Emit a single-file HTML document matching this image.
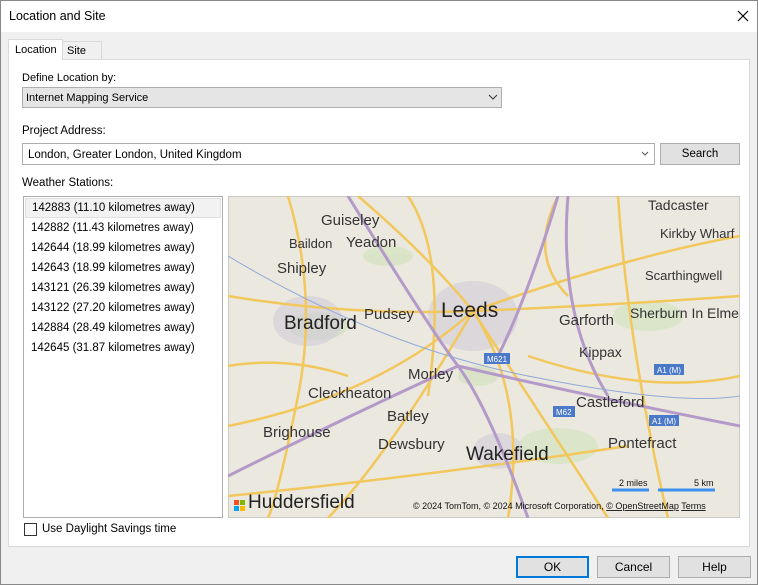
<!DOCTYPE html>
<html><head><style>
*{box-sizing:border-box}
body{margin:0;width:758px;height:585px;background:#f0f0f0;font-family:"Liberation Sans",sans-serif;font-size:11.5px;color:#000;position:relative;overflow:hidden;border:1px solid #888}
.a{position:absolute}
.btn{position:absolute;top:555px;height:22px;width:73px;background:#e1e1e1;border:1px solid #adadad;text-align:center;line-height:20px;font-size:12px}
.lst div{height:20px;line-height:20px;padding-left:6px}
</style></head><body>
<div class="a" style="left:0;top:0;width:756px;height:31px;background:#fff"></div>
<div class="a" style="left:8px;top:8px;font-size:12.5px">Location and Site</div>
<svg class="a" style="left:736px;top:9px" width="12" height="12"><path d="M1 1L11 11M11 1L1 11" stroke="#000" stroke-width="1.2"/></svg>
<div class="a" style="left:7px;top:58px;width:742px;height:488px;background:#fff;border:1px solid #d9d9d9"></div>
<div class="a" style="left:7px;top:38px;width:55px;height:21px;background:#fff;border:1px solid #d9d9d9;border-bottom:none;padding:4px 0 0 6px;font-size:11px">Location</div>
<div class="a" style="left:61px;top:40px;width:40px;height:18px;background:#f0f0f0;border:1px solid #d9d9d9;border-bottom:none;padding:3px 0 0 4px;font-size:11px">Site</div>
<div class="a" style="left:21px;top:71px;font-size:11px">Define Location by:</div>
<div class="a" style="left:21px;top:86px;width:480px;height:21px;background:#e5e5e5;border:1px solid #adadad;padding:4px 0 0 3px;font-size:11px">Internet Mapping Service</div>
<svg class="a" style="left:487px;top:93px" width="10" height="6"><path d="M1 1l4 4 4-4" fill="none" stroke="#333"/></svg>
<div class="a" style="left:21px;top:124px">Project Address:</div>
<div class="a" style="left:21px;top:142px;width:633px;height:22px;background:#fff;border:1px solid #adadad;padding:5px 0 0 5px">London, Greater London, United Kingdom</div>
<svg class="a" style="left:640px;top:150px" width="8" height="5"><path d="M1 1l3 3 3-3" fill="none" stroke="#555"/></svg>
<div class="a" style="left:659px;top:142px;width:80px;height:22px;background:#e1e1e1;border:1px solid #adadad;text-align:center;line-height:20px">Search</div>
<div class="a" style="left:21px;top:176px">Weather Stations:</div>
<div class="a lst" style="left:22px;top:195px;width:200px;height:322px;background:#fff;border:1px solid #adadad;padding:1px">
<div style="background:#f2f2f2;border:1px solid #e0e0e0;line-height:19px">142883 (11.10 kilometres away)</div>
<div>142882 (11.43 kilometres away)</div><div>142644 (18.99 kilometres away)</div><div>142643 (18.99 kilometres away)</div><div>143121 (26.39 kilometres away)</div><div>143122 (27.20 kilometres away)</div><div>142884 (28.49 kilometres away)</div><div>142645 (31.87 kilometres away)</div></div>
<svg class="a" style="left:227px;top:195px" width="512" height="322" viewBox="0 0 512 322" font-family="Liberation Sans">
<rect width="512" height="322" fill="#ebe8df" stroke="#adadad"/>
<g fill="#d6e3c3" opacity=".8"><ellipse cx="90" cy="130" rx="30" ry="14"/><ellipse cx="330" cy="250" rx="40" ry="18"/><ellipse cx="420" cy="120" rx="35" ry="15"/><ellipse cx="160" cy="60" rx="25" ry="10"/><ellipse cx="250" cy="180" rx="20" ry="10"/></g>
<g fill="#d0ccd8" opacity=".6"><ellipse cx="245" cy="120" rx="45" ry="35"/><ellipse cx="80" cy="125" rx="35" ry="25"/><ellipse cx="270" cy="255" rx="25" ry="18"/></g>
<g fill="none" stroke="#f2c75c" stroke-width="2.5">
<path d="M0 100 Q120 120 245 115 T512 100"/><path d="M60 0 Q90 100 70 200 T40 322"/><path d="M245 115 Q300 200 280 322"/><path d="M245 115 Q400 60 512 40"/><path d="M0 230 Q150 200 245 115"/><path d="M245 115 L380 322"/><path d="M130 0 Q200 60 245 115"/><path d="M390 0 Q400 150 440 322"/><path d="M245 115 Q160 260 100 322"/><path d="M300 160 Q420 200 512 180"/><path d="M0 300 Q200 280 400 250"/><path d="M180 0 Q220 60 200 200"/><path d="M0 170 Q60 160 120 180"/><path d="M330 0 Q300 60 340 100"/></g>
<g fill="none" stroke="#b49ac8" stroke-width="3">
<path d="M120 0 Q200 130 230 170 T300 322"/><path d="M230 170 Q360 200 512 230"/><path d="M0 280 Q120 220 230 170"/><path d="M340 0 Q330 120 380 200"/><path d="M270 160 Q300 100 330 0"/></g>
<g fill="none" stroke="#8fa9d9" stroke-width="1"><path d="M0 60 Q150 150 300 180 T512 200"/></g>
<g font-size="15" fill="#333"><text x="93" y="29">Guiseley</text><text x="61" y="52" font-size="13">Baildon</text><text x="118" y="51">Yeadon</text><text x="49" y="77">Shipley</text><text x="136" y="123">Pudsey</text><text x="331" y="129">Garforth</text><text x="351" y="161" font-size="14">Kippax</text><text x="80" y="202">Cleckheaton</text><text x="180" y="183">Morley</text><text x="159" y="225">Batley</text><text x="35" y="241">Brighouse</text><text x="150" y="253">Dewsbury</text><text x="348" y="211">Castleford</text><text x="380" y="252">Pontefract</text><text x="420" y="14" font-size="14">Tadcaster</text><text x="432" y="42" font-size="13">Kirkby Wharf</text><text x="417" y="84" font-size="13">Scarthingwell</text><text x="402" y="122" font-size="14">Sherburn In Elme</text></g>
<g font-size="19" fill="#222"><text x="56" y="133">Bradford</text><text x="213" y="121" font-size="21">Leeds</text><text x="238" y="264">Wakefield</text><text x="20" y="312">Huddersfield</text></g>
<g font-size="8" fill="#fff"><rect x="256" y="157" width="26" height="11" fill="#4a79c9"/><text x="259" y="166">M621</text><rect x="325" y="210" width="22" height="11" fill="#4a79c9"/><text x="328" y="219">M62</text><rect x="426" y="168" width="30" height="11" fill="#4a79c9"/><text x="429" y="177">A1 (M)</text><rect x="421" y="219" width="30" height="11" fill="#4a79c9"/><text x="424" y="228">A1 (M)</text></g>
<g font-size="9" fill="#111"><text x="391" y="290">2 miles</text><text x="466" y="290">5 km</text><text x="185" y="313">© 2024 TomTom, © 2024 Microsoft Corporation, <tspan text-decoration="underline">© OpenStreetMap</tspan>  <tspan text-decoration="underline">Terms</tspan></text></g>
<path d="M384 294h37M430 294h57" stroke="#3d8ff0" stroke-width="3"/>
<g><rect x="6" y="304" width="5" height="5" fill="#f25022"/><rect x="12" y="304" width="5" height="5" fill="#7fba00"/><rect x="6" y="310" width="5" height="5" fill="#00a4ef"/><rect x="12" y="310" width="5" height="5" fill="#ffb900"/></g>
</svg>
<div class="a" style="left:23px;top:522px;width:13px;height:13px;border:1px solid #333;background:#fff"></div>
<div class="a" style="left:41px;top:522px">Use Daylight Savings time</div>
<div class="btn" style="left:515px;border:2px solid #0078d7;line-height:18px">OK</div>
<div class="btn" style="left:596px">Cancel</div>
<div class="btn" style="left:677px">Help</div>
</body></html>
